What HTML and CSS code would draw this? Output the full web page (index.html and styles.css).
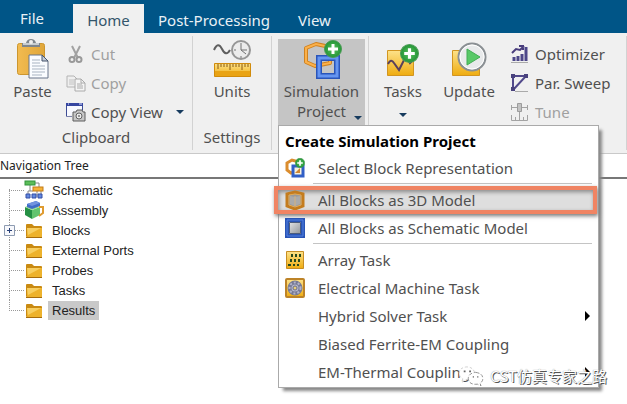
FILE: index.html
```html
<!DOCTYPE html>
<html lang="en">
<head>
<meta charset="utf-8">
<title>Simulation Project</title>
<link rel="stylesheet" href="styles.css">
</head>
<body>
<svg class="defs" width="0" height="0" aria-hidden="true">
  <defs>
    <linearGradient id="gold" x1="0" y1="0" x2="0" y2="1"><stop offset="0" stop-color="#fde28a"/><stop offset="1" stop-color="#efac10"/></linearGradient>
    <linearGradient id="board" x1="0" y1="0" x2="1" y2="0"><stop offset="0" stop-color="#f2bb50"/><stop offset="1" stop-color="#e0a63a"/></linearGradient>
    <linearGradient id="steel" x1="0" y1="0" x2="1" y2="1"><stop offset="0" stop-color="#f4f4f4"/><stop offset="1" stop-color="#80858b"/></linearGradient>
    <radialGradient id="green"><stop offset="0" stop-color="#5cc35f"/><stop offset="1" stop-color="#239436"/></radialGradient>
    <symbol id="plus" viewBox="0 0 18 18"><circle cx="9" cy="9" r="8.500" fill="url(#green)" stroke="#4b9c55"/><path d="M9 4v10M4 9h10" stroke="#fff" stroke-width="3"/></symbol>
    <symbol id="folder" viewBox="0 0 18 16"><path d="M1 13V2q0-1 1-1h5l2 2h7q1 0 1 1v9q0 1-1 1H2q-1 0-1-1z" fill="#c98a12"/><path d="M2 5h15v8q0 1-1 1H3q-1 0-1-1z" fill="#edb22c"/><path d="M2 5h14L3 12z" fill="#f7cf63"/><path d="M1 14.500h16" stroke="#a66c0b"/></symbol>
  </defs>
</svg>

<nav class="tabs">
  <button class="tab tab-file">File</button>
  <button class="tab tab-active">Home</button>
  <button class="tab">Post-Processing</button>
  <button class="tab">View</button>
</nav>

<header class="ribbon">
  <section class="group group-clipboard">
    <div class="group-body">
      <button class="big paste">
        <svg width="34" height="40" viewBox="0 0 34 40"><rect x="1.500" y="4.500" width="27" height="31" rx="2" fill="url(#board)" stroke="#cc962f"/><path d="M6 8V4h4q1-4 5-4t5 4h4v4z" fill="#7f868d"/><path d="M7 5h16" stroke="#c8cdd1" stroke-width="2"/><circle cx="15" cy="3" r="2" fill="#f0f0f0"/><path d="M13 16h13l6 6v17H13z" fill="#fafcff" stroke="#68758a"/><path d="M26 16v6h6z" fill="#c3ccd8" stroke="#46556d"/><path d="M16 21h8M16 24h8M16 27h13M16 30h13M16 33h13M16 36h10" stroke="#a8b3c1"/></svg>
        <span>Paste</span>
      </button>
      <div class="stack">
        <button class="small" disabled>
          <svg width="20" height="20" viewBox="0 0 20 20"><path d="M6 2l6 12M14 2L8 14" stroke="#a2a2a2" stroke-width="2" fill="none"/><circle cx="6" cy="15.500" r="2.500" fill="none" stroke="#999" stroke-width="2"/><circle cx="13" cy="15.500" r="2.500" fill="none" stroke="#999" stroke-width="2"/></svg>
          <span>Cut</span>
        </button>
        <button class="small" disabled>
          <svg width="20" height="20" viewBox="0 0 20 20"><path d="M1 3h7l3 3v8H1z" fill="#efefef" stroke="#b4b4b4"/><path d="M3 7h5M3 9h5M3 11h5" stroke="#c2c2c2"/><path d="M9 6h6l4 4v8H9z" fill="#f5f5f5" stroke="#aaa"/><path d="M15 6v4h4M11 11h5M11 13h6M11 15h6" stroke="#aaa" fill="none"/></svg>
          <span>Copy</span>
        </button>
        <button class="small">
          <svg width="20" height="20" viewBox="0 0 20 20"><path d="M.500 14.500v-13h16v7" fill="#f8f9ff" stroke="#3d4c94"/><path d="M0 1h17v3H0z" fill="#3646a0"/><path d="M2 2h1M13 2h3" stroke="#dfe4ff"/><path d="M.500 14.500H6" stroke="#7d83ab"/><path d="M7 10h3l1-2h5l1 2h2v9H7z" fill="#c7c7c7" stroke="#5d5d5d"/><circle cx="13" cy="14" r="3" fill="#ececec" stroke="#626262"/><circle cx="13" cy="14" r="1" fill="#777"/></svg>
          <span>Copy View</span><i class="caret"></i>
        </button>
      </div>
    </div>
    <h2 class="group-label">Clipboard</h2>
  </section>

  <section class="group group-settings">
    <div class="group-body">
      <button class="big">
        <svg width="40" height="40" viewBox="0 0 40 40"><path d="M2 11q4-9 8-1t8 1" fill="none" stroke="#5f5f5f" stroke-width="2"/><circle cx="29" cy="11" r="9" fill="#ececec" stroke="#969696" stroke-width="2"/><path d="M29 4v7h6M29 11l5 4M22 11h2M29 17v2" stroke="#727272" fill="none"/><path d="M2.500 24.500h36v13h-36z" fill="url(#gold)" stroke="#d18b0b"/><path d="M3 32h35v5H3z" fill="#e9a314"/><path d="M6 25v5M9 25v3M12 25v3M15 25v3M18 25v6M21 25v3M24 25v3M27 25v3M30 25v6M33 25v3M36 25v3" stroke="#8a5b12"/></svg>
        <span>Units</span>
      </button>
    </div>
    <h2 class="group-label">Settings</h2>
  </section>

  <section class="group group-simulation">
    <div class="group-body">
      <div class="dropdown">
        <button class="big project" aria-expanded="true">
          <svg width="40" height="40" viewBox="0 0 40 40"><path d="M4 9l10-4 14 3v16l-15 3-9-4z" fill="none" stroke="#cf8220" stroke-width="4" stroke-linejoin="round"/><path d="M4 9l10-4 14 3v16l-15 3-9-4z" fill="none" stroke="#fbb04a" stroke-width="2"/><path d="M17 19h18v18H17z" fill="none" stroke="#2a55ba" stroke-width="6"/><path d="M17 19h18v18H17z" fill="none" stroke="#6595f2" stroke-width="3"/><use href="#plus" x="22" y="1" width="18" height="18"/></svg>
          <span>Simulation</span><span>Project</span><i class="caret"></i>
        </button>
        <div class="menu" role="menu">
          <h3 class="menu-title">Create Simulation Project</h3>
          <button class="item" role="menuitem">
            <svg width="20" height="20" viewBox="0 0 20 20"><path d="M2 5l5-3 7 2v9l-8 2-4-3z" fill="none" stroke="#db8d2e" stroke-width="3"/><path d="M8 8h10v10H8z" fill="#f8f1dd" stroke="#315fc6" stroke-width="3"/><path d="M10 15l5-5v5z" fill="#d18731"/><use href="#plus" x="10" y="0" width="10" height="10"/></svg>
            <span>Select Block Representation</span>
          </button>
          <hr>
          <button class="item selected" role="menuitem">
            <svg width="20" height="20" viewBox="0 0 20 20"><path d="M2 4l8-2 8 2v12l-8 3-8-3z" fill="#949494" stroke="#c47c1e" stroke-width="3"/><path d="M4 5l6-1 6 1v10l-6 2-6-2z" fill="#999" stroke="#e7aa50"/><path d="M5 6l5 1 5-1v8l-5 2-5-2z" fill="#aaa"/><path d="M10 6v10" stroke="#d5b27c"/></svg>
            <span>All Blocks as 3D Model</span>
          </button>
          <button class="item" role="menuitem">
            <svg width="20" height="20" viewBox="0 0 20 20"><path d="M2 2h16v16H2z" fill="url(#steel)" stroke="#2954b5" stroke-width="4"/><path d="M2 2h16v16H2z" fill="none" stroke="#5280e2"/><path d="M4.500 4.500h11v11h-11z" fill="none" stroke="#4c5c7c"/></svg>
            <span>All Blocks as Schematic Model</span>
          </button>
          <hr>
          <button class="item" role="menuitem">
            <svg width="20" height="20" viewBox="0 0 20 20"><path d="M1.500 1.500h17v17h-17z" fill="url(#gold)" stroke="#c78d22"/><path d="M6 4h2v3H6zM10 4h2v3h-2zM14 4h2v3h-2zM5 9h2v3H5zM9 9h2v3H9zM13 9h2v3h-2zM3 14h3v2H3zM8 14h2v2H8zM12 14h2v2h-2z" fill="#294a1d"/></svg>
            <span>Array Task</span>
          </button>
          <button class="item" role="menuitem">
            <svg width="20" height="20" viewBox="0 0 20 20"><rect x="1" y="1" width="18" height="18" rx="1" fill="url(#gold)" stroke="#bd8328" stroke-width="2"/><circle cx="10" cy="10" r="5.500" fill="#b6b8ce" stroke="#777a96" stroke-width="4"/><circle cx="10" cy="10" r="5.500" fill="none" stroke="#b2b4ca" stroke-width="2" stroke-dasharray="2 2"/><circle cx="10" cy="10" r="2" fill="#e9cf7d" stroke="#6c6f86"/></svg>
            <span>Electrical Machine Task</span>
          </button>
          <button class="item" role="menuitem"><i class="blank"></i><span>Hybrid Solver Task</span><i class="arrow"></i></button>
          <button class="item" role="menuitem"><i class="blank"></i><span>Biased Ferrite-EM Coupling</span></button>
          <button class="item" role="menuitem"><i class="blank"></i><span>EM-Thermal Coupling</span><i class="arrow"></i></button>
          <div class="watermark">
            <svg width="26" height="20" viewBox="0 0 28 22"><path d="M18 7Q16 1 9 1 1 2 1 8q0 4 4 6l-1 4 4-3h3" fill="#fff" stroke="#ccc" stroke-dasharray="3 2"/><path d="M19 7q8 1 8 7 0 3-3 5l1 3-4-2q-9 1-10-6 0-6 8-7z" fill="#fff" stroke="#888" stroke-dasharray="4 2"/><path d="M6 6h2M12 6h2M16 12h1M21 12h1" stroke="#666" stroke-width="2"/></svg>
            <span lang="zh">CST仿真专家之路</span>
          </div>
        </div>
      </div>
    </div>
  </section>

  <section class="group group-tasks">
    <div class="group-body">
      <button class="big tasks">
        <svg width="34" height="40" viewBox="0 0 34 40"><path d="M1.500 11.500h26v25h-26z" fill="url(#gold)" stroke="#d29520"/><path d="M2 25q3-6 6-1l5 7 7-14 4 7 3-3" fill="none" stroke="#59405b" stroke-width="2"/><use href="#plus" x="14" y="5" width="19" height="19"/></svg>
        <span>Tasks</span><i class="caret"></i>
      </button>
      <button class="big update">
        <svg width="36" height="40" viewBox="0 0 36 40"><path d="M1.500 11.500h27v25h-27z" fill="url(#gold)" stroke="#d29520"/><circle cx="21" cy="18" r="13.500" fill="#e8eaeb" stroke="#8a8f93" stroke-width="2"/><circle cx="21" cy="18" r="12" fill="none" stroke="#fff"/><path d="M16 10l13 8-13 8z" fill="#58c968" stroke="#43ad55"/></svg>
        <span>Update</span>
      </button>
      <div class="stack">
        <button class="small">
          <svg width="20" height="20" viewBox="0 0 20 20"><path d="M4 13v4M8 12v5M12 10v7M16 3v14" stroke="#4d4789" stroke-width="3"/><path d="M2 9l4-4 4 1 4-4M9 2h4v4" fill="none" stroke="#493d7d" stroke-width="2"/><path d="M1 18.500h17" stroke="#aaa"/></svg>
          <span>Optimizer</span>
        </button>
        <button class="small">
          <svg width="20" height="20" viewBox="0 0 20 20"><path d="M3 17V3h13L3 17" fill="none" stroke="#51498b" stroke-width="2"/><path d="M1 1h4v4H1zM14 1h4v4h-4zM1 14h4v4H1z" fill="#49427d"/><path d="M5 18.500h13" stroke="#aaa"/></svg>
          <span>Par. Sweep</span>
        </button>
        <button class="small" disabled>
          <svg width="20" height="20" viewBox="0 0 20 20"><path d="M2 5.500h5M12 5.500h5M1.500 3v5M17.500 3v5" stroke="#a3a3a3"/><path d="M7.500 1.500h4v8h-4z" fill="#c2c2c2" stroke="#9c9c9c"/><path d="M9.500 10v8M1.500 13v5.500h16V13M5.500 15v3M13.500 15v3" fill="none" stroke="#a3a3a3"/></svg>
          <span>Tune</span>
        </button>
      </div>
    </div>
  </section>
</header>

<main class="navigation">
  <h2 class="nav-title">Navigation Tree</h2>
  <ul class="tree">
    <li><svg width="20" height="20" viewBox="0 0 20 20"><path d="M6 5v6M11 3h4v4M4 15v-4h5M13 11v6M17 10v7" fill="none" stroke="#888"/><rect x="1" y="1" width="10" height="4" fill="#5cbd59" stroke="#31943b"/><rect x="9" y="7" width="10" height="4" fill="#f4b238" stroke="#c37b16"/><path d="M2 14h4v4H2zM8 14h4v4H8zM14 14h4v4h-4z" fill="#6388de" stroke="#344fa7"/></svg><span>Schematic</span></li>
    <li><svg width="20" height="20" viewBox="0 0 20 20"><path d="M1 7l7 3v9l-7-4z" fill="#259044"/><path d="M8 10l8-3v8l-8 4z" fill="#63c46e"/><path d="M1 7l7-3 8 3-8 3z" fill="#95d991"/><path d="M3 4l9-3 4 2v3L8 9 3 7z" fill="#416cc8"/><path d="M3 4l9-3 4 2-8 3z" fill="#7293df"/><path d="M15 7h4v6l-4 3" fill="none" stroke="#df9b30" stroke-width="2"/></svg><span>Assembly</span></li>
    <li><button class="expander" aria-label="Expand Blocks"><svg width="11" height="11" viewBox="0 0 11 11"><path d="M.500.500h10v10H.500z" fill="#f7f8fc" stroke="#8d9bb1"/><path d="M3 5.500h5M5.500 3v5" stroke="#263e76"/></svg></button><svg width="20" height="20"><use href="#folder" x="1" y="3" width="18" height="16"/></svg><span>Blocks</span></li>
    <li><svg width="20" height="20"><use href="#folder" x="1" y="3" width="18" height="16"/></svg><span>External Ports</span></li>
    <li><svg width="20" height="20"><use href="#folder" x="1" y="3" width="18" height="16"/></svg><span>Probes</span></li>
    <li><svg width="20" height="20"><use href="#folder" x="1" y="3" width="18" height="16"/></svg><span>Tasks</span></li>
    <li><svg width="20" height="20"><use href="#folder" x="1" y="3" width="18" height="16"/></svg><span class="current">Results</span></li>
  </ul>
</main>
</body>
</html>
```
FILE: styles.css
```css
* { box-sizing: border-box; }

body {
  min-height: 100vh;
  margin: 0;
  background: #fff;
  color: #505050;
  font: 15px/20px "Noto Sans", "Open Sans", sans-serif;
}

h2, h3, ul { margin: 0; padding: 0; font-weight: normal; }
svg { display: block; flex: none; }
.defs { position: absolute; }

button {
  border: 0;
  padding: 0;
  background: none;
  color: inherit;
  font: inherit;
  white-space: nowrap;
}
button:disabled { color: #a0a0a0; }

.tabs {
  display: flex;
  align-items: flex-end;
  height: 33px;
  padding-left: 8px;
  background: #005587;
}
.tab { height: 29px; padding: 3px 14px 0; color: #e9f1f6; }
.tab-file { width: 48px; height: 33px; margin-right: 17px; padding: 3px 0 0; }
.tab-active { width: 71px; padding: 3px 0 0; background: #f0f0f0; color: #33556b; }

.ribbon {
  display: flex;
  height: 121px;
  padding-top: 3px;
  border-bottom: 1px solid #c9c9c9;
  background: #f0f0f0;
}
.group {
  display: flex;
  flex-direction: column;
  margin-bottom: 3px;
  border-right: 1px solid #d2d2d2;
}
.group-body { display: flex; height: 91px; padding-top: 3px; }
.group-label { font-size: 15px; line-height: 20px; text-align: center; }
.group-clipboard { width: 193px; }
.group-settings { width: 79px; }
.group-simulation { width: 97px; padding-left: 6px; }
.group-tasks { flex: 1; padding-left: 8px; }

.big {
  position: relative;
  display: flex;
  flex-direction: column;
  align-items: center;
  width: 100%;
  height: 86px;
}
.big svg { margin-bottom: 2px; }
.paste { width: 65px; }
.tasks { width: 52px; }
.update { width: 80px; }
.caret {
  border: 4px solid transparent;
  border-top-color: #173b5e;
  border-bottom: 0;
}
.tasks .caret { margin-top: 12px; }
.project .caret { position: absolute; right: 3px; bottom: 5px; }

.stack { display: flex; flex-direction: column; }
.small { display: flex; align-items: center; gap: 5px; height: 29px; }
.small .caret { margin-left: 8px; }
.group-clipboard .stack { margin-left: 1px; }
.group-tasks .stack { margin-left: 1px; }

.dropdown { position: relative; width: 87px; height: 86px; }
.project { background: #c5c5c5; }
.menu {
  position: absolute;
  z-index: 1;
  top: 86px;
  left: 0;
  width: 321px;
  padding: 2px 6px 1px;
  border: 1px solid #aaa;
  background: #fff;
  box-shadow: 4px 4px 3px -1px #888;
}
.menu-title {
  color: #000;
  font-size: 15px;
  font-weight: bold;
  line-height: 26px;
}
.item {
  display: flex;
  align-items: center;
  gap: 13px;
  width: 100%;
  height: 28px;
  text-align: left;
}
.menu hr { height: 1px; margin: 1px 0 2px 28px; border: 0; background: #c4c4c4; }
.blank { width: 20px; }
.arrow {
  margin-left: auto;
  margin-right: 2px;
  border: 5px solid transparent;
  border-left-color: #000;
  border-right: 0;
}
.selected {
  width: 323px;
  margin-left: -11px;
  padding-left: 7px;
  border: 4px solid #f08463;
  background: #dedede;
  box-shadow: 1px 2px 4px #777, inset 1px 2px 4px #888;
}

.watermark {
  position: absolute;
  right: -9px;
  bottom: 0;
  display: flex;
  align-items: center;
  gap: 6px;
  color: #fff;
  font: 15px/22px "Noto Sans CJK SC", sans-serif;
  text-shadow: 1px 1px 0 #555, 0 0 1px #777;
  white-space: nowrap;
}

.nav-title {
  height: 25px;
  border-bottom: 2px solid #777;
  color: #222;
  font-size: 12px;
  line-height: 24px;
}
.tree {
  padding: 1px 0 0 9px;
  color: #222;
  font: 13px/19px "Liberation Sans", Arial, sans-serif;
  list-style: none;
}
.tree li {
  position: relative;
  display: flex;
  align-items: center;
  gap: 4px;
  height: 20px;
  padding-left: 15px;
}
.tree li::before {
  content: "";
  position: absolute;
  top: 0;
  left: 0;
  width: 14px;
  height: 10px;
  border-left: 1px dotted #999;
  border-bottom: 1px dotted #999;
}
.tree li:not(:last-child)::after {
  content: "";
  position: absolute;
  top: 10px;
  left: 0;
  height: 10px;
  border-left: 1px dotted #999;
}
.tree li:first-child::before { top: 9px; height: 1px; }
.expander {
  position: absolute;
  z-index: 1;
  top: 5px;
  left: -5px;
}
.tree span { padding: 0 4px; }
.tree .current { background: #c9c9c9; }
```
